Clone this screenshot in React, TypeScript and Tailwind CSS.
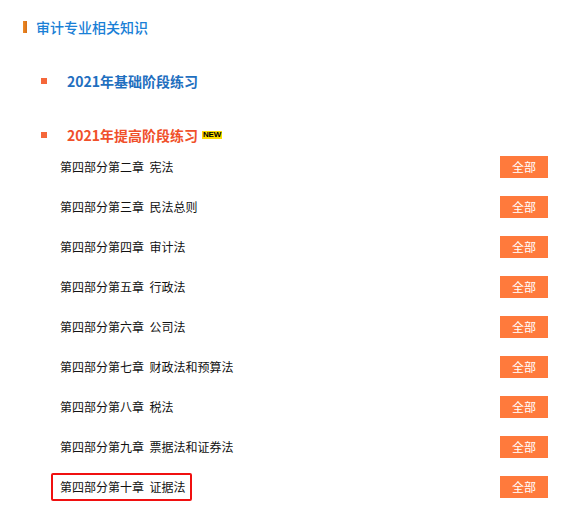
import React from 'react';

const chapters = [
  '第四部分第二章  宪法',
  '第四部分第三章  民法总则',
  '第四部分第四章  审计法',
  '第四部分第五章  行政法',
  '第四部分第六章  公司法',
  '第四部分第七章  财政法和预算法',
  '第四部分第八章  税法',
  '第四部分第九章  票据法和证券法',
  '第四部分第十章  证据法',
];

const font = { fontFamily: '"Microsoft YaHei", "Noto Sans CJK SC", "Noto Sans", sans-serif' };

export default function App() {
  return (
    <div className="w-[562px] h-[517px] bg-white overflow-hidden" style={font}>
      {/* 标题 */}
      <div className="pt-[17px] pl-[23px] flex items-center h-[37px]">
        <span className="w-[4px] h-[12px] bg-gradient-to-r from-[#f08a24] to-[#d4701a]" />
        <span className="ml-[9px] text-[14px] font-medium text-[#1a80d6] leading-5">审计专业相关知识</span>
      </div>

      {/* 基础阶段 */}
      <div className="mt-[32px] h-[24px] flex items-center pl-[41px]">
        <span className="w-[6px] h-[6px] bg-[#f5673a]" />
        <span className="ml-[20px] text-[14px] font-bold text-[#1f6fbf] leading-6">2021年基础阶段练习</span>
      </div>

      {/* 提高阶段 */}
      <div className="mt-[30px] h-[24px] flex items-center pl-[41px]">
        <span className="w-[6px] h-[6px] bg-[#f5673a]" />
        <span className="ml-[20px] text-[14px] font-bold text-[#f0502a] leading-6">2021年提高阶段练习</span>
        <span
          className="ml-[4px] mt-[-1px] h-[8px] px-[1px] flex items-center bg-[#ffdd00] text-[8px] font-bold leading-none text-black tracking-tight"
          style={{ fontFamily: '"Liberation Sans", Arial, sans-serif' }}
        >
          NEW
        </span>
      </div>

      <div className="flex flex-col">
        {chapters.map((c, i) => {
          const last = i === chapters.length - 1;
          return (
            <div key={c} className="h-[40px] flex items-center justify-between pr-[14px]">
              {last ? (
                <span className="ml-[51px] h-[28px] flex items-center pl-[7px] pr-[5px] border-2 border-[#f01010] rounded-[2px] text-[12px] text-[#111] whitespace-pre">
                  {c}
                </span>
              ) : (
                <span className="ml-[60px] text-[12px] text-[#111] whitespace-pre">{c}</span>
              )}
              <span className="w-[48px] h-[22px] bg-[#ff7a3c] text-white text-[12px] flex items-center justify-center">
                全部
              </span>
            </div>
          );
        })}
      </div>
    </div>
  );
}
